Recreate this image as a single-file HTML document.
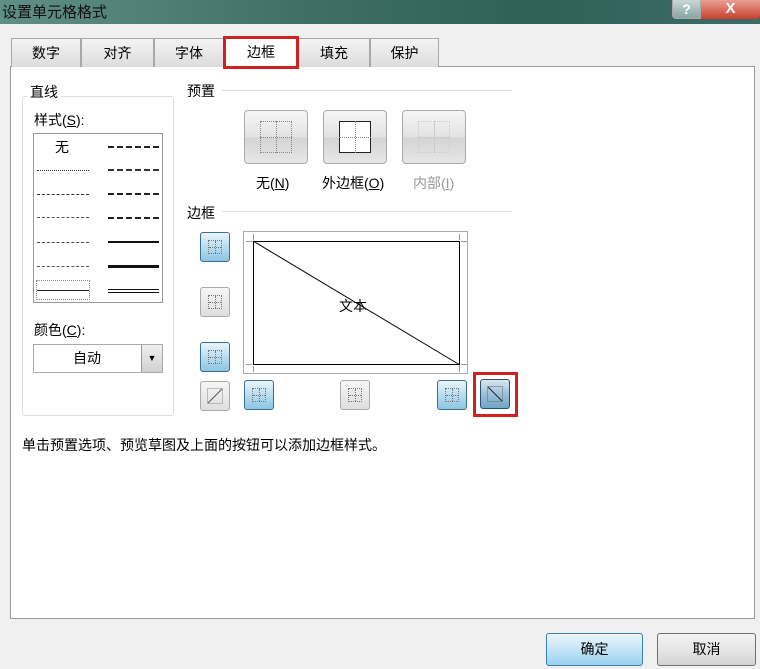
<!DOCTYPE html>
<html><head><meta charset="utf-8"><style>
*{margin:0;padding:0;box-sizing:border-box}
body{width:760px;height:669px;overflow:hidden;background:#f0f0f0;font-family:"Liberation Sans","Noto Sans CJK SC",sans-serif;font-size:14px;color:#000;position:relative}
.a{position:absolute}
.title{left:0;top:0;width:760px;height:24px;background:linear-gradient(90deg,#5f8f86 0%,#3f6f66 40%,#2f6158 70%,#3d6c66 100%)}
.tab{position:absolute;top:38px;height:29px;border:1px solid #a8a8a8;border-bottom:none;background:linear-gradient(#f4f4f4,#dcdcdc);text-align:center;line-height:28px;font-size:14px}
.panel{left:10px;top:66px;width:745px;height:553px;background:#fff;border:1px solid #9a9a9a}
.pbtn{position:absolute;width:64px;height:54px;border:1px solid #aaa;border-radius:4px;background:linear-gradient(#f6f6f6,#e2e2e2 50%,#d4d4d4 52%,#e6e6e6)}
.sb{position:absolute;width:30px;height:30px;border:1px solid #3d6e8f;border-radius:3px;background:linear-gradient(#eaf5fb,#b8ddf0 50%,#8cc6e4)}
.sb.g{border-color:#aaa;background:linear-gradient(#f6f6f6,#dedede)}
.sb i{position:absolute;left:7px;top:7px;width:14px;height:14px;border:1px dotted #777}
.sb i:before{content:"";position:absolute;left:6px;top:0;height:12px;border-left:1px dotted #777}
.sb i:after{content:"";position:absolute;top:6px;left:0;width:12px;border-top:1px dotted #777}
.ln{position:absolute;height:0}
.btn{position:absolute;top:633px;height:33px;border:1px solid #707070;border-radius:3px;text-align:center;line-height:31px;font-size:14px}
</style></head><body>
<div class="a title"></div>
<div class="a" style="left:2px;top:1px;font-size:15px;color:#111">设置单元格格式</div>
<div class="a" style="left:672px;top:0;width:29px;height:19px;border:1px solid #aaa;border-top:none;border-radius:0 0 0 4px;background:linear-gradient(#c9d6d6,#8aa4a4);color:#fff;text-align:center;font-weight:bold;font-size:14px;line-height:18px">?</div>
<div class="a" style="left:701px;top:0;width:59px;height:19px;border-radius:0 0 4px 0;background:linear-gradient(#e9a093,#c8402c);color:#fff;text-align:center;font-weight:bold;font-size:15px;line-height:18px">X</div>

<div class="a panel"></div>
<div class="tab" style="left:11px;width:70px">数字</div>
<div class="tab" style="left:81px;width:73px">对齐</div>
<div class="tab" style="left:154px;width:70px">字体</div>
<div class="tab" style="left:298px;width:72px">填充</div>
<div class="tab" style="left:370px;width:69px">保护</div>
<div class="a" style="left:223px;top:36px;width:76px;height:33px;background:#fff;border:3px solid #d0201f;text-align:center;line-height:27px;font-size:14px">边框</div>

<div class="a" style="left:22px;top:96px;width:152px;height:320px;border:1px solid #ddd;border-radius:3px"></div>
<div class="a" style="left:27px;top:82px;background:#fff;padding:0 3px;font-size:14px">直线</div>
<div class="a" style="left:34px;top:110px">样式(<u>S</u>):</div>
<div class="a" style="left:33px;top:133px;width:130px;height:170px;border:1px solid #999;background:#fff"></div>
<div class="a" style="left:55px;top:137px">无</div>
<div class="ln" style="left:37px;top:170px;width:52px;border-top:1px dotted #333"></div>
<div class="ln" style="left:37px;top:194px;width:52px;border-top:1px dashed #333"></div>
<div class="ln" style="left:37px;top:217px;width:52px;border-top:1px dashed #555"></div>
<div class="ln" style="left:37px;top:242px;width:52px;border-top:1px dashed #444"></div>
<div class="ln" style="left:37px;top:266px;width:52px;border-top:1px dashed #555"></div>
<div class="a" style="left:36px;top:280px;width:54px;height:20px;border:1px dotted #888"></div>
<div class="ln" style="left:37px;top:290px;width:52px;border-top:1px solid #222"></div>
<div class="ln" style="left:108px;top:146px;width:51px;border-top:2px dashed #222"></div>
<div class="ln" style="left:108px;top:169px;width:51px;border-top:2px dashed #333"></div>
<div class="ln" style="left:108px;top:193px;width:51px;border-top:2px dashed #222"></div>
<div class="ln" style="left:108px;top:217px;width:51px;border-top:2px dashed #222"></div>
<div class="ln" style="left:108px;top:241px;width:51px;border-top:2px solid #111"></div>
<div class="ln" style="left:108px;top:265px;width:51px;border-top:3px solid #111"></div>
<div class="ln" style="left:108px;top:289px;width:51px;height:4px;border-top:1px solid #111;border-bottom:1px solid #111"></div>
<div class="a" style="left:34px;top:320px;font-size:14px">颜色(<u>C</u>):</div>
<div class="a" style="left:33px;top:344px;width:130px;height:29px;border:1px solid #aaa;background:#fff;text-align:center;line-height:27px;padding-right:22px;font-size:14px">自动</div>
<div class="a" style="left:141px;top:345px;width:21px;height:27px;border-left:1px solid #999;background:linear-gradient(#f0f0f0,#d0d0d0);text-align:center;font-size:9px;line-height:27px">▼</div>

<div class="a" style="left:187px;top:81px;font-size:14px">预置</div>
<div class="ln" style="left:222px;top:90px;width:290px;border-top:1px solid #ddd"></div>
<div class="pbtn" style="left:244px;top:110px"><div class="a" style="left:15px;top:10px;width:32px;height:32px;border:1px dotted #888"></div><div class="a" style="left:31px;top:10px;height:32px;border-left:1px dotted #888"></div><div class="a" style="left:15px;top:26px;width:32px;border-top:1px dotted #888"></div></div>
<div class="pbtn" style="left:323px;top:110px"><div class="a" style="left:15px;top:10px;width:32px;height:32px;border:1px solid #222;background:#fff"></div><div class="a" style="left:31px;top:10px;height:32px;border-left:1px dotted #888"></div><div class="a" style="left:15px;top:26px;width:32px;border-top:1px dotted #888"></div></div>
<div class="pbtn" style="left:402px;top:110px"><div class="a" style="left:15px;top:10px;width:32px;height:32px;border:1px dotted #ccc"></div><div class="a" style="left:31px;top:10px;height:32px;border-left:1px solid #ccc"></div><div class="a" style="left:15px;top:26px;width:32px;border-top:1px solid #ccc"></div></div>
<div class="a" style="left:256px;top:173px;font-size:14px">无(<u>N</u>)</div>
<div class="a" style="left:322px;top:173px;font-size:14px">外边框(<u>O</u>)</div>
<div class="a" style="left:413px;top:173px;font-size:14px;color:#999">内部(<u>I</u>)</div>

<div class="a" style="left:187px;top:203px;font-size:14px">边框</div>
<div class="ln" style="left:222px;top:211px;width:290px;border-top:1px solid #ddd"></div>
<div class="a" style="left:243px;top:231px;width:225px;height:143px;border:1px solid #aaa;background:#fff"></div>
<svg class="a" style="left:243px;top:231px" width="225" height="143">
<rect x="10.5" y="10.5" width="206" height="123" fill="none" stroke="#000"/>
<line x1="10" y1="10" x2="217" y2="134" stroke="#000"/>
<path d="M3 10.5h6M218 10.5h6M3 133.5h6M218 133.5h6M10.5 3v6M216.5 3v6M10.5 135v6M216.5 135v6" stroke="#999"/>
</svg>
<div class="a" style="left:339px;top:296px;font-size:14px">文本</div>

<div class="sb" style="left:200px;top:232px"><i></i></div>
<div class="sb g" style="left:200px;top:287px"><i></i></div>
<div class="sb" style="left:200px;top:342px"><i></i></div>
<div class="sb g" style="left:200px;top:381px"><svg class="a" style="left:6px;top:6px" width="16" height="16"><rect x="0.5" y="0.5" width="15" height="15" fill="none" stroke="#888" stroke-dasharray="1 1"/><line x1="1" y1="15" x2="15" y2="1" stroke="#555"/></svg></div>
<div class="sb" style="left:244px;top:380px"><i></i></div>
<div class="sb g" style="left:340px;top:380px"><i></i></div>
<div class="sb" style="left:437px;top:380px"><i></i></div>
<div class="a" style="left:473px;top:372px;width:45px;height:45px;border:3px solid #d0201f"></div>
<div class="sb" style="left:480px;top:379px;border-color:#2f4f6f;background:linear-gradient(#d8e6ef,#9cc0d8 50%,#6fa6c8)"><svg class="a" style="left:6px;top:6px" width="16" height="16"><rect x="0.5" y="0.5" width="15" height="15" fill="none" stroke="#666" stroke-dasharray="1 1"/><line x1="1" y1="1" x2="15" y2="15" stroke="#222"/></svg></div>

<div class="a" style="left:22px;top:435px;font-size:14px">单击预置选项、预览草图及上面的按钮可以添加边框样式。</div>

<div class="btn" style="left:546px;width:97px;border-color:#3c7fb1;background:linear-gradient(#eaf6fd,#c4e5f6 50%,#98d1ef)">确定</div>
<div class="btn" style="left:657px;width:99px;background:linear-gradient(#f2f2f2,#e6e6e6 50%,#d3d3d3)">取消</div>
</body></html>
